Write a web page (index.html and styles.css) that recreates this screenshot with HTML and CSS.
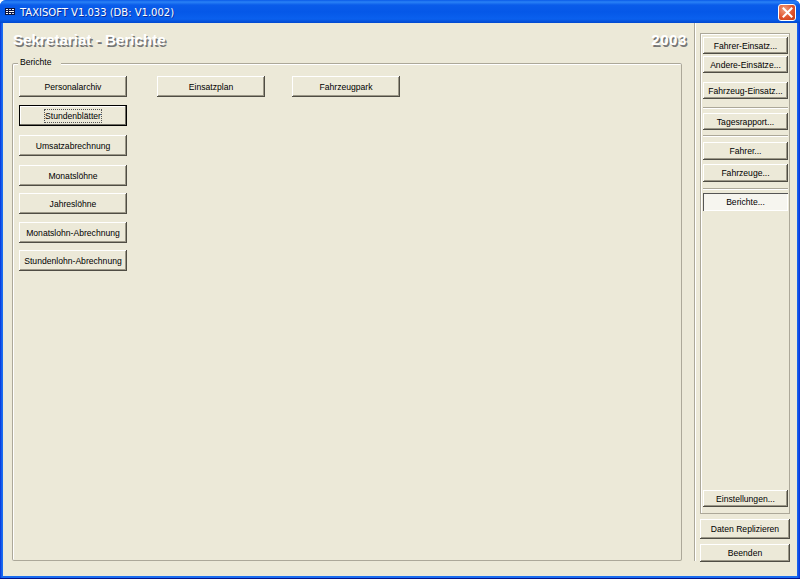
FILE: index.html
```html
<!DOCTYPE html>
<html lang="de">
<head>
<meta charset="utf-8">
<title>TAXISOFT</title>
<link rel="stylesheet" href="styles.css">
</head>
<body>
<div class="window">
  <header class="titlebar">
    <svg class="app-icon" width="16" height="16" viewBox="0 0 16 16" aria-hidden="true">
      <rect x="1" y="4" width="10" height="7" fill="#0c1440"/>
      <rect x="2" y="5" width="2" height="1" fill="#fff"/><rect x="5" y="5" width="2" height="1" fill="#d8d8e8"/><rect x="8" y="5" width="2" height="1" fill="#fff"/>
      <rect x="2" y="7" width="2" height="1" fill="#fff"/><rect x="5" y="7" width="5" height="1" fill="#fff"/>
      <rect x="2" y="9" width="2" height="1" fill="#fff"/><rect x="5" y="9" width="2" height="1" fill="#fff"/><rect x="8" y="9" width="2" height="1" fill="#d8d8e8"/>
    </svg>
    <span class="title-text">TAXISOFT V1.033 (DB: V1.002)</span>
    <button class="close" aria-label="Schließen">
      <svg width="11" height="11" viewBox="0 0 11 11" aria-hidden="true"><path d="M1.5 1.5l8 8M9.5 1.5l-8 8" stroke="#fff" stroke-width="2" stroke-linecap="square"/></svg>
    </button>
  </header>
  <div class="client">
    <main class="main">
      <div class="heading">
        <h1>Sekretariat - Berichte</h1>
        <span class="year">2003</span>
      </div>
      <fieldset class="group">
        <legend>Berichte</legend>
        <div class="reports">
          <div class="col col-stack">
            <button class="btn">Personalarchiv</button>
            <button class="btn focused"><span>Stundenblätter</span></button>
            <button class="btn r3">Umsatzabrechnung</button>
            <button class="btn r4">Monatslöhne</button>
            <button class="btn r5">Jahreslöhne</button>
            <button class="btn r6">Monatslohn-Abrechnung</button>
            <button class="btn r7">Stundenlohn-Abrechnung</button>
          </div>
          <div class="col col-second"><button class="btn">Einsatzplan</button></div>
          <div class="col"><button class="btn">Fahrzeugpark</button></div>
        </div>
      </fieldset>
    </main>
    <aside class="side">
      <nav class="panel">
        <button class="btn nav">Fahrer-Einsatz...</button>
        <button class="btn nav n2">Andere-Einsätze...</button>
        <button class="btn nav n3">Fahrzeug-Einsatz...</button>
        <hr class="sep sep1">
        <button class="btn nav n4">Tagesrapport...</button>
        <hr class="sep sep2">
        <button class="btn nav tall n5">Fahrer...</button>
        <button class="btn nav tall n6">Fahrzeuge...</button>
        <hr class="sep sep3">
        <button class="btn nav tall n7 pressed">Berichte...</button>
        <button class="btn nav bottom">Einstellungen...</button>
      </nav>
      <button class="btn wide w1">Daten Replizieren</button>
      <button class="btn wide w2">Beenden</button>
    </aside>
  </div>
</div>
</body>
</html>
```
FILE: styles.css
```css
* { box-sizing: border-box; }
html, body { margin: 0; height: 100%; }
body { width: 800px; height: 579px; overflow: hidden; font-family: "Liberation Sans", Arial, sans-serif; font-size: 8.6px; color: #000; }
.window { width: 800px; height: 579px; display: flex; flex-direction: column; padding: 0 3px 2px; background: linear-gradient(90deg, #0831d9 0, #1a6cf0 2px, #1a6cf0 797px, #0831d9 100%); border-bottom: 1px solid #00138c; border-radius: 6px 6px 0 0; }
.titlebar { height: 23px; flex: none; margin: 0 -3px; padding: 1px 4px 0 4px; display: flex; align-items: center; color: #fff; background: linear-gradient(180deg, #0a5ae8 0, #2a82f6 2px, #0a5cea 5px, #0558e8 12px, #0a60ee 19px, #0048d0 23px); border-radius: 6px 6px 0 0; }
.app-icon { flex: none; }
.title-text { flex: 1; font-family: "DejaVu Sans", sans-serif; font-size: 10px; text-shadow: 1px 1px 0 #0a2f9c; }
.close { width: 18px; height: 17px; padding: 0; border: 1px solid #fff; border-radius: 3px; background: radial-gradient(circle at 35% 30%, #f0a080, #e0552f 55%, #c03810); display: flex; align-items: center; justify-content: center; }
.client { flex: 1; display: flex; background: #ece9d8; padding: 0 6px 15px 9px; min-height: 0; }
.main { width: 670px; flex: none; display: flex; flex-direction: column; }
.heading { height: 33px; flex: none; display: flex; justify-content: space-between; align-items: flex-start; margin-right: -5px; padding: 8px 0 0 1px; }
h1, .year { margin: 0; font-size: 15.2px; line-height: 18px; font-weight: bold; color: #fff; text-shadow: 1.5px 1.5px 0 #777; }
.year { letter-spacing: 0.5px; }
.group { flex: 1; margin: 0; padding: 0 6px; border: 0; min-width: 0; border-radius: 2px; box-shadow: inset 0 0 0 1px #aca899, inset 1px 1px 0 1px #fff; }
.group legend { padding: 0 9px 0 2px; line-height: 13px; background: #ece9d8; }
.reports { display: flex; gap: 27px; padding: 7px 0 0 1px; }
.col { display: flex; flex-direction: column; }
.col-second { margin-left: 3px; }
.btn { font: inherit; color: #000; background: #ece9d8; padding: 0; border: 0; width: 108px; height: 21px; display: block; flex: none; white-space: nowrap; text-align: center; box-shadow: inset -1px -1px 0 #4f4d44, inset 1px 1px 0 #fff, inset -2px -2px 0 #9c9888; }
.focused { width: 106px; height: 19px; margin: 9px 1px 1px; box-shadow: 0 0 0 1px #000, inset -1px -1px 0 #716f64, inset 1px 1px 0 #fff; }
.focused span { outline: 1px dotted #555; padding: 1px 0; }
.r3 { margin-top: 9px; }
.r4 { margin-top: 9px; }
.r5 { margin-top: 7px; }
.r6 { margin-top: 8px; }
.r7 { margin-top: 7px; }
.side { flex: 1; margin-left: 12px; padding: 10px 0 0 5px; display: flex; flex-direction: column; border-left: 1px solid #aca899; box-shadow: inset 1px 0 0 #fff; }
.panel { width: 90px; height: 481px; flex: none; padding: 4px 2px 7px 3px; display: flex; flex-direction: column; box-shadow: inset 0 0 0 1px #aca899, inset 1px 1px 0 1px #fff; }
.nav { width: 85px; height: 17px; }
.tall { height: 18px; }
.n2 { margin-top: 2px; }
.n3 { margin-top: 9px; }
.n4 { margin-top: 4px; }
.n5 { margin-top: 5px; }
.n6 { margin-top: 4px; }
.n7 { margin-top: 3px; }
.sep { width: 85px; height: 2px; margin: 0; border: 0; border-top: 1px solid #aca899; border-bottom: 1px solid #fff; }
.sep1 { margin-top: 8px; }
.sep2 { margin-top: 5px; }
.sep3 { margin-top: 6px; }
.pressed { background: #f6f5ef; box-shadow: inset 1px 1px 0 #555, inset -1px -1px 0 #fff; }
.bottom { margin-top: auto; }
.wide { width: 90px; height: 20px; }
.w1 { margin-top: 5px; }
.w2 { margin-top: 5px; height: 18px; }
```
